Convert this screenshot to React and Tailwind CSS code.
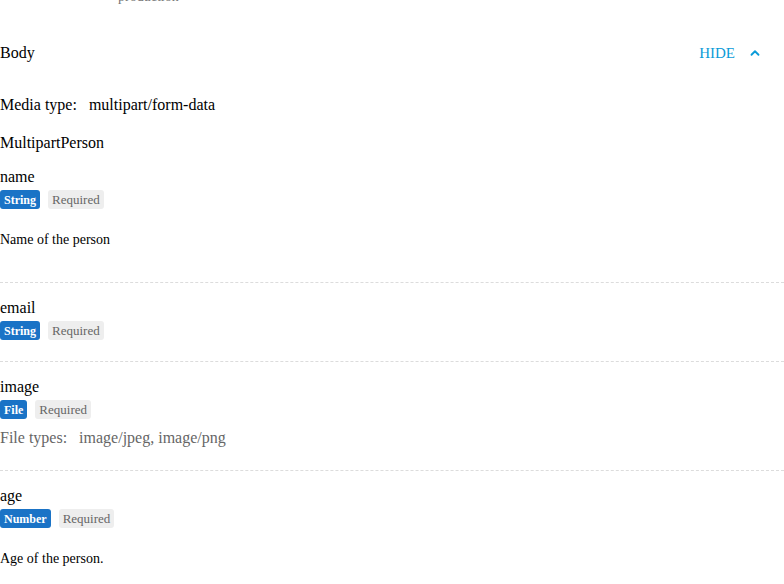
import React from "react";

const Badge = ({ children, kind }) =>
  kind === "type" ? (
    <span className="inline-flex h-[19px] items-center rounded-[3px] bg-[#1a73c6] px-[4px] text-[12px] font-bold text-white">
      {children}
    </span>
  ) : (
    <span className="inline-flex h-[19px] items-center rounded-[3px] bg-[#eeeeee] px-[4px] text-[13px] text-[#666]">
      {children}
    </span>
  );

const Field = ({ name, type, children, last, first }) => (
  <div className={last ? "" : "border-b border-dashed border-[#dcdcdc]"}>
    <div className={(first ? "mt-[14px]" : "mt-[15px]") + " text-[16px] leading-[20px] text-black"}>{name}</div>
    <div className="mt-[3px] flex gap-[8px]">
      <Badge kind="type">{type}</Badge>
      <Badge>Required</Badge>
    </div>
    {children}
  </div>
);

export default function App() {
  return (
    <div
      className="h-[584px] w-[784px] overflow-hidden bg-white text-black"
      style={{ fontFamily: '"Liberation Serif", "Times New Roman", serif' }}
    >
      <div className="-mt-[12px] pl-[118px] text-[14px] leading-[18px] text-[#777]">production</div>
      <div className="mt-[27px] flex h-[40px] items-center justify-between pr-[22px]">
        <span className="text-[16px]">Body</span>
        <button className="flex items-center gap-[13px] text-[15px] text-[#0c9bd8]">
          HIDE
          <svg width="14" height="14" viewBox="0 0 24 24" fill="none" stroke="#0c9bd8" strokeWidth="3.2" strokeLinecap="round" strokeLinejoin="round">
            <path d="M6 15l6-6 6 6" />
          </svg>
        </button>
      </div>
      <div className="mt-[22px] flex text-[16px] leading-[20px]">
        <span>Media type:</span>
        <span className="ml-[12px]">multipart/form-data</span>
      </div>
      <div className="mt-[18px] text-[16px] leading-[20px]">MultipartPerson</div>
      <div>
        <Field name="name" type="String" first>
          <div className="mt-[22px] mb-[33px] text-[14px] leading-[18px]">Name of the person</div>
        </Field>
        <Field name="email" type="String">
          <div className="h-[21px]" />
        </Field>
        <Field name="image" type="File">
          <div className="mt-[9px] mb-[22px] flex text-[16px] leading-[20px] text-[#666]">
            <span>File types:</span>
            <span className="ml-[12px]">image/jpeg, image/png</span>
          </div>
        </Field>
        <Field name="age" type="Number" last>
          <div className="mt-[22px] text-[14px] leading-[18px]">Age of the person.</div>
        </Field>
      </div>
    </div>
  );
}
